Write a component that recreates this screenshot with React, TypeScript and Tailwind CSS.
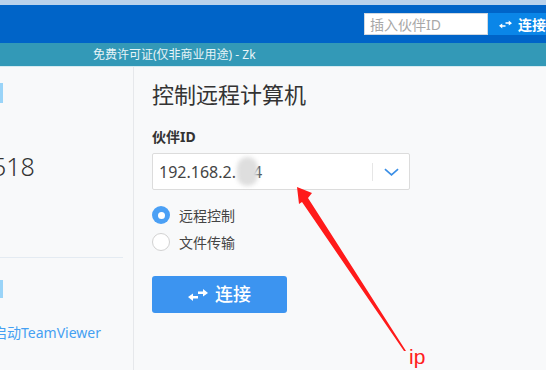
import React from 'react';

const font = "font-['Noto_Sans','Noto_Sans_CJK_SC',sans-serif]";

function SwapIcon({ className }: { className?: string }) {
  return (
    <svg viewBox="0 0 20 12" className={className} fill="currentColor">
      <polygon points="0,8 5,4.5 5,7 10,7 10,9.5 5,9.5 5,12" />
      <polygon points="20,4 15,0 15,2.5 10,2.5 10,5 15,5 15,7.5" />
    </svg>
  );
}

function Radio({ checked, label }: { checked?: boolean; label: string }) {
  return (
    <div className="flex items-center h-[20px] gap-[9px]">
      {checked ? (
        <div className="w-[18px] h-[18px] rounded-full bg-[#4ba0f5] flex items-center justify-center">
          <div className="w-[7px] h-[7px] rounded-full bg-white" />
        </div>
      ) : (
        <div className="w-[18px] h-[18px] rounded-full border border-[#d2d2d2] bg-white" />
      )}
      <span className="text-[14px] text-[#444]">{label}</span>
    </div>
  );
}

export default function App() {
  return (
    <div className={`relative w-[546px] h-[370px] overflow-hidden bg-[#f8f9fa] ${font}`}>
      {/* header */}
      <div className="h-[5px] bg-[#b9d2ec]" />
      <div className="h-[38px] bg-[#0064c8] flex items-center justify-end">
        <div className="w-[124px] h-[22px] bg-white border border-[#d0d8e0] flex items-center px-[5px] text-[14px] text-[#a8a8a8]">
          插入伙伴ID
        </div>
        <div className="h-[22px] w-[58px] bg-[#0a86e8] flex items-center gap-[6px] pl-[11px] text-white text-[14px] font-bold whitespace-nowrap">
          <SwapIcon className="w-[15px] h-[9px]" />
          <span>连接</span>
        </div>
      </div>
      <div className="h-[23px] bg-[#3399b7] flex items-center pl-[93px] text-[12px] text-[#e8f4f8]">
        免费许可证(仅非商业用途) - Zk
      </div>
      <div className="h-[1px] bg-[#d6ebf1]" />

      <div className="flex h-[303px]">
        {/* left panel */}
        <div className="w-[134px] border-r border-[#e6e8eb] flex flex-col overflow-hidden">
          <div className="mt-[16px] w-[3px] h-[20px] bg-[#9ad4f8]" />
          <div className="mt-[47px] ml-[-8px] text-[25px] leading-[32px] font-light text-[#333]">518</div>
          <div className="mt-[75px] w-[123px] h-[1px] bg-[#e4ebf2]" />
          <div className="mt-[22px] w-[3px] h-[18px] bg-[#9ad4f8]" />
          <div className="mt-[25px] ml-[-7px] text-[14px] leading-[20px] text-[#45a0f2] whitespace-nowrap">启动TeamViewer</div>
        </div>

        {/* right panel */}
        <div className="flex-1 pl-[18px] pt-[12px] flex flex-col">
          <div className="text-[22px] leading-[30px] text-[#333]">控制远程计算机</div>
          <div className="mt-[18px] text-[14px] leading-[20px] font-bold text-[#333]">伙伴ID</div>
          <div className="relative mt-[6px] w-[258px] h-[37px] bg-white border border-[#dcdcdc] rounded-[2px] flex items-center">
            <div className="flex-1 pl-[6px] text-[16px] text-[#444] whitespace-nowrap">
              192.168.2.<span className="inline-block w-[17px]" />4
            </div>
            <div className="w-[1px] h-[18px] bg-[#e6e6e6]" />
            <div className="w-[36px] flex justify-center">
              <svg viewBox="0 0 16 8" className="w-[15px] h-[8px]" fill="none" stroke="#3a8ee6" strokeWidth="1.8">
                <polyline points="1,1 8,7 15,1" />
              </svg>
            </div>
            <div className="absolute left-[84px] top-[3px] w-[21px] h-[29px] rounded-full bg-[#dedede] blur-[2px]" />
          </div>
          <div className="mt-[15px] flex flex-col gap-[7px]">
            <Radio checked label="远程控制" />
            <Radio label="文件传输" />
          </div>
          <div className="mt-[24px] w-[135px] h-[37px] rounded-[3px] bg-[#3c94f0] flex items-center justify-center gap-[7px] text-white text-[18px] font-medium">
            <SwapIcon className="w-[20px] h-[12px]" />
            <span>连接</span>
          </div>
        </div>
      </div>

      {/* annotation */}
      <svg className="absolute left-0 top-0 w-[546px] h-[370px] pointer-events-none" viewBox="0 0 546 370">
        <polygon points="297,187 312,193 308,198 406,351 404,351 302,202 299,204" fill="#ff1a1a" />
      </svg>
      <div className="absolute left-[409px] top-[343px] text-[21px] leading-[28px] text-[#ff2020] font-['Liberation_Sans',sans-serif]">
        ip
      </div>
    </div>
  );
}
